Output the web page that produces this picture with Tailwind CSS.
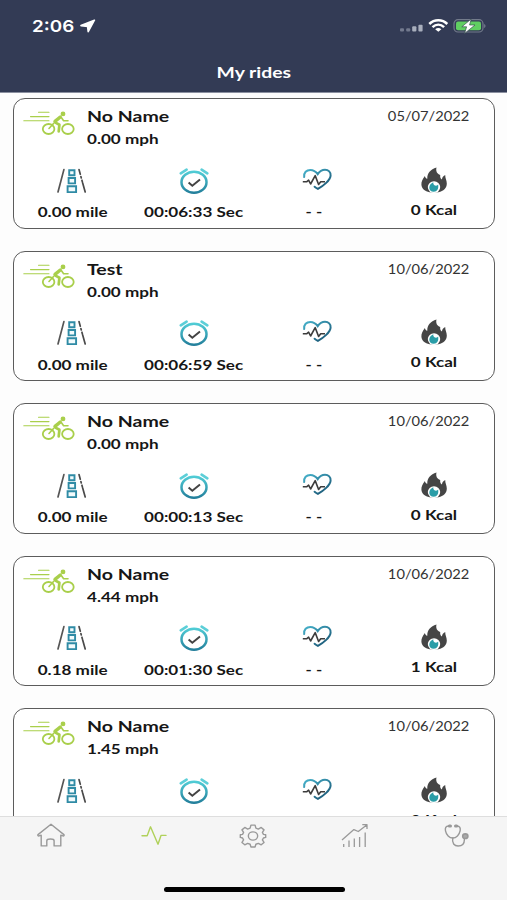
<!DOCTYPE html>
<html lang="en">
<head>
    <meta charset="UTF-8">
    <meta name="viewport" content="width=device-width, initial-scale=1.0">
    <title>My rides</title>
    <script src="https://cdn.jsdelivr.net/npm/@tailwindcss/browser@4"></script>
</head>
<body class="flex h-[900px] w-[507px] flex-col overflow-hidden bg-[#fdfdfd] font-['Lato',sans-serif] text-[#161616]">
    <!-- Icons shared by every ride card -->
    <svg class="absolute size-0">
        <defs>
            <linearGradient id="teal" x1="0" y1="2" x2="0" y2="28" gradientUnits="userSpaceOnUse">
                <stop offset="0" stop-color="#55d5dc" />
                <stop offset="1" stop-color="#1f7896" />
            </linearGradient>
            <linearGradient id="blue" x1="4" y1="2" x2="18" y2="24" gradientUnits="userSpaceOnUse">
                <stop offset="0" stop-color="#47b4cd" />
                <stop offset="1" stop-color="#1d5d7b" />
            </linearGradient>
        </defs>
        <symbol id="bike" viewBox="0 0 53 28">
            <g fill="none" stroke="#a9cf4b" stroke-linecap="round" stroke-linejoin="round">
                <path stroke-width="1.1" d="M15.5 3.2H26M7.5 7.6H26M.8 11.7H26" />
                <ellipse cx="25.6" cy="20" rx="5.8" ry="5" stroke-width="1.8" />
                <ellipse cx="44.9" cy="20" rx="5.8" ry="5" stroke-width="1.8" />
                <path stroke-width="3.4" d="M37.3 8 32 12.4" />
                <path stroke-width="2.7" d="M32 13.4 36.4 15.8 35.7 22.4" />
                <path stroke-width="1.6" d="M38.5 8.8 40.6 11.8H45M26 19.5 30.5 14.5" />
            </g>
            <circle cx="40" cy="4.9" r="2.4" fill="#a9cf4b" />
        </symbol>
        <symbol id="road" viewBox="0 0 31 28">
            <path d="M7.9 2.6 2 25" stroke="#555" stroke-width="1.7" stroke-linecap="round" />
            <path d="M23 2.6 24.3 7.2M24.9 9.5 25.3 11M25.9 13.2 26.4 15M26.6 15.8 29.2 25" stroke="#4a4a4a" stroke-width="1.7" stroke-linecap="round" />
            <path d="M13.2 3.2h5.3v5h-5.3zM12.6 11h6.5v5.4h-6.5zM11.6 19.3h8.5v5.8h-8.5z" fill="#f2fbfc" stroke="#2f8ba5" stroke-width="1.9" />
        </symbol>
        <symbol id="clock" viewBox="0 0 30 28">
            <ellipse cx="15" cy="15.2" rx="12.5" ry="10.5" fill="none" stroke="url(#teal)" stroke-width="2.5" />
            <path d="M1.8 6.4 7.6 2.7M22.6 2.7 28.3 6.4" stroke="#5ccfd8" stroke-width="2.6" stroke-linecap="round" />
            <path d="M9.6 15.6 13.3 18.8 21 12.5" fill="none" stroke="#444" stroke-width="2" />
        </symbol>
        <symbol id="heart" viewBox="0 1 30 28">
            <path d="M2.2 11C1.6 6.5 4.5 3.9 8.3 3.9c3.7 0 5.7 1.8 7.4 4.2C17.6 5.2 20 3.8 23 3.8c3.5 0 5.9 2.4 5.6 5.8-.3 4.6-7.3 10.4-12.7 13.2-1.3-.6-2.3-1.3-3.3-2.1" fill="none" stroke="url(#blue)" stroke-width="2" stroke-linecap="round" />
            <path d="M.8 15.8H4.6L6.6 14.2 8.6 18 13.2 9.6 16.6 18.5 18.7 15.8H23" fill="none" stroke="#3c3c3c" stroke-width="1.6" stroke-linejoin="round" />
        </symbol>
        <symbol id="flame" viewBox="0 .6 28 28">
            <path d="M16.5 1C10.5 3 7 6.7 7.3 12.4 5.8 11.8 5.2 10.8 4.9 9.5 2.5 12.4 1.2 15.4 1.4 18.3 1.8 22.5 5 24.8 9.5 25.8h9c5-1 8.3-4 8.3-8.6 0-3.3-1.7-5.7-1.6-8.7-2.3 1.1-3.2 2.6-3.2 4.5-1.6-1-2-2.4-1.8-4.5C17 7.4 15.6 4.5 16.5 1Z" fill="#454545" />
            <ellipse cx="14" cy="20.7" rx="6.2" ry="5.9" fill="#fff" />
            <path d="M13.3 15.9c-.4 2.2 1.2 3.4 2.8 3.4.8 0 1.6-.4 2-1.1.8 4.4-1.1 7.2-4.2 7.2-3.2 0-4.8-1.9-4.6-4.5.2-2.2 1.7-4 4-5Z" fill="#2a9da7" />
        </symbol>
    </svg>

    <!-- Header -->
    <header class="h-[93px] shrink-0 border-b border-[#8b90a0] bg-[#333b55] text-white">
        <div class="flex h-[52px] items-center justify-between pl-8 pr-[21px]">
            <div class="flex items-center gap-[5px]">
                <span id="time" class="w-[43px]"><span class="inline-block origin-left scale-x-[1.14] font-['Inter',sans-serif] text-[16.5px] font-semibold leading-6">2:06</span></span>
                <svg class="h-[14px] w-4" viewBox="0 0 16 14"><path d="M14.4 1.2 1 6.6 7.6 7.4 8.2 12.6Z" fill="#fff" stroke="#fff" stroke-width="1.6" stroke-linejoin="round" /></svg>
            </div>
            <svg class="h-4 w-[86px]" viewBox="0 0 86 16">
                <g fill="#737a8e">
                    <rect y="10.3" width="4" height="3.2" rx="1" />
                    <rect x="6.2" y="10.3" width="4" height="3.2" rx="1" />
                </g>
                <g fill="#a8aebc">
                    <rect x="12.2" y="8.2" width="4.2" height="5.3" rx="1" />
                    <rect x="18.4" y="6.8" width="4.2" height="6.7" rx="1" />
                </g>
                <g fill="none" stroke="#fff" stroke-width="2.5">
                    <path d="M29.3 6C34.3 1 42.3 1 47.3 6" />
                    <path d="M32.5 9.2C36 5.9 40.6 5.9 44.1 9.2" />
                </g>
                <path d="M35.2 11.2c1.8-1.7 4.4-1.7 6.2 0l-3.1 2.5Z" fill="#fff" />
                <rect x="54" y="1.7" width="29" height="12.3" rx="4" fill="none" stroke="#737b8b" stroke-width="1.2" />
                <rect x="56" y="3.6" width="25" height="8.6" rx="2" fill="#60cf61" />
                <path d="M84.3 6v4c1.5-.6 1.5-3.4 0-4Z" fill="#858c9c" />
                <path d="M71.2 1 61.8 8.8h4.8l-2 6.6 10.4-8.4h-5.4Z" fill="#fff" stroke="#36504f" stroke-width=".7" />
            </svg>
        </div>
        <h1 class="mt-2 text-center text-base font-bold leading-6"><span class="inline-block scale-x-[1.21]">My rides</span></h1>
    </header>

    <!-- Ride list, filled in by the script below -->
    <main id="rides" class="flex min-h-0 flex-1 flex-col gap-[22px] overflow-hidden pl-[13px] pr-3 pt-[5px]"></main>

    <!-- Tab bar -->
    <nav class="grid h-[84px] shrink-0 grid-cols-5 grid-rows-[38px_1fr] justify-items-center border-t border-[#dedede] bg-[#f5f5f5] pt-[5px]">
        <svg class="h-7 w-[30px]" viewBox="0 0 30 28" fill="none" stroke="#999" stroke-width="1.4" stroke-linejoin="round">
            <path d="M15 2.2 2 12.6c-.6.6.1 1.7 1.1 1.3l2.1-.7v10.7h5.6v-5.2c0-2.3 7.3-2.3 7.3 0v5.2h6.7V13.2l2.1.7c1 .3 1.6-.7 1-1.3Z" />
        </svg>
        <svg class="ml-1 h-7 w-[26px]" viewBox="0 0 26 28" fill="none" stroke="#b0d15a" stroke-width="1.4" stroke-linejoin="round" stroke-linecap="round">
            <path d="M1 13.8H6.2L9.5 4.8 17 22.2 20 13.4H25" />
        </svg>
        <svg class="mt-px h-[26px] w-7" viewBox="0 0 30 28" preserveAspectRatio="none" fill="none" stroke="#999" stroke-width="1.5" stroke-linejoin="round">
            <path d="M12.8 2.3h4.4l.9 3.2 2.6 1 3.1-1.7 3 2.6-1.7 2.8 1.1 2.1 2.4.4v2.8l-2.4.6-1.1 2.1 1.7 2.7-3 2.6-3.1-1.6-2.6 1-.9 2.9h-4.4l-.9-2.9-2.6-1-3.1 1.6-3-2.6 1.7-2.7-1.1-2.1-2.4-.6v-2.8l2.4-.4 1.1-2.1-1.7-2.8 3-2.6 3.1 1.7 2.6-1Z" />
            <ellipse cx="15" cy="14" rx="5" ry="4.4" />
        </svg>
        <svg class="h-7 w-[28px]" viewBox="0 0 28 28" fill="none" stroke="#999" stroke-width="1.3" stroke-linejoin="round">
            <path d="M1 18 12.9 7.6 17.3 9.5 26 2.8M21.3 2.7H26V7M2.7 22v3M8 18.5V25M13.3 16.5V25M18.6 15V25M24.2 10.5V25" />
        </svg>
        <svg class="ml-0.5 h-7 w-[28px]" viewBox="0 0 28 28" fill="none" stroke="#999" stroke-width="1.4" stroke-linecap="round">
            <path d="M5.5 4C2.8 4 1.9 6 2.5 8.8 3.3 12.8 6.3 16 9.8 16s6.5-3.2 7.3-7.2C17.7 6 16.8 4 14 4" />
            <path d="M9.8 16c-1.2 5.3 1.7 8 5.3 8 4 0 6.3-2.5 6.3-6.6" />
            <path stroke-width="3" d="M6.3 4H7.5M12.5 4H13.7" />
            <ellipse cx="22.3" cy="14.2" rx="2.6" ry="2.3" fill="#aaa" stroke-width="1.6" />
        </svg>
        <div class="col-span-5 ml-px mt-[27px] h-[5px] w-[181px] rounded-full bg-black"></div>
    </nav>

    <script>
        const rides = [
            { name: 'No Name', date: '05/07/2022', speed: '0.00', miles: '0.00', time: '00:06:33', kcal: 0 },
            { name: 'Test', date: '10/06/2022', speed: '0.00', miles: '0.00', time: '00:06:59', kcal: 0 },
            { name: 'No Name', date: '10/06/2022', speed: '0.00', miles: '0.00', time: '00:00:13', kcal: 0 },
            { name: 'No Name', date: '10/06/2022', speed: '4.44', miles: '0.18', time: '00:01:30', kcal: 1 },
            { name: 'No Name', date: '10/06/2022', speed: '1.45', miles: '0.00', time: '00:02:10', kcal: 0 },
        ];

        document.getElementById('rides').innerHTML = rides.map((ride) => `
            <article class="h-[130.5px] shrink-0 rounded-xl border border-[#5c5c5c] bg-white pt-[5px]">
                <div class="flex h-[62.5px] items-start pl-[9px] pr-[24.5px]">
                    <svg class="mt-[5px] h-7 w-[53px]"><use href="#bike" /></svg>
                    <div class="ml-[11px] flex-1 font-bold">
                        <h2 class="text-base leading-6"><span class="inline-block origin-left scale-x-[1.22]">${ride.name}</span></h2>
                        <p class="text-sm leading-[22px]"><span class="inline-block origin-left scale-x-[1.22]">${ride.speed} mph</span></p>
                    </div>
                    <time class="inline-block origin-right scale-x-[1.175] text-[12.5px] leading-[25px] text-[#333]">${ride.date}</time>
                </div>
                <div class="grid grid-cols-[117px_125px_122px_112px] text-center text-sm font-bold leading-5">
                    <div class="flex flex-col items-center gap-[7.5px]">
                        <svg class="-ml-0.5 h-7 w-[31px]"><use href="#road" /></svg>
                        <span class="inline-block scale-x-[1.22] whitespace-nowrap">${ride.miles} mile</span>
                    </div>
                    <div class="flex flex-col items-center gap-[7.5px]">
                        <svg class="h-7 w-[30px]"><use href="#clock" /></svg>
                        <span class="inline-block scale-x-[1.22] whitespace-nowrap">${ride.time} Sec</span>
                    </div>
                    <div class="flex flex-col items-center gap-[7.5px]">
                        <svg class="h-7 w-[30px]"><use href="#heart" /></svg>
                        <span class="-ml-1.5 inline-block scale-x-[1.2]">- -</span>
                    </div>
                    <div class="flex flex-col items-center gap-[5px]">
                        <svg class="h-7 w-[28px]"><use href="#flame" /></svg>
                        <span class="inline-block scale-x-[1.22] whitespace-nowrap">${ride.kcal} Kcal</span>
                    </div>
                </div>
            </article>`).join('');
    </script>
</body>
</html>
